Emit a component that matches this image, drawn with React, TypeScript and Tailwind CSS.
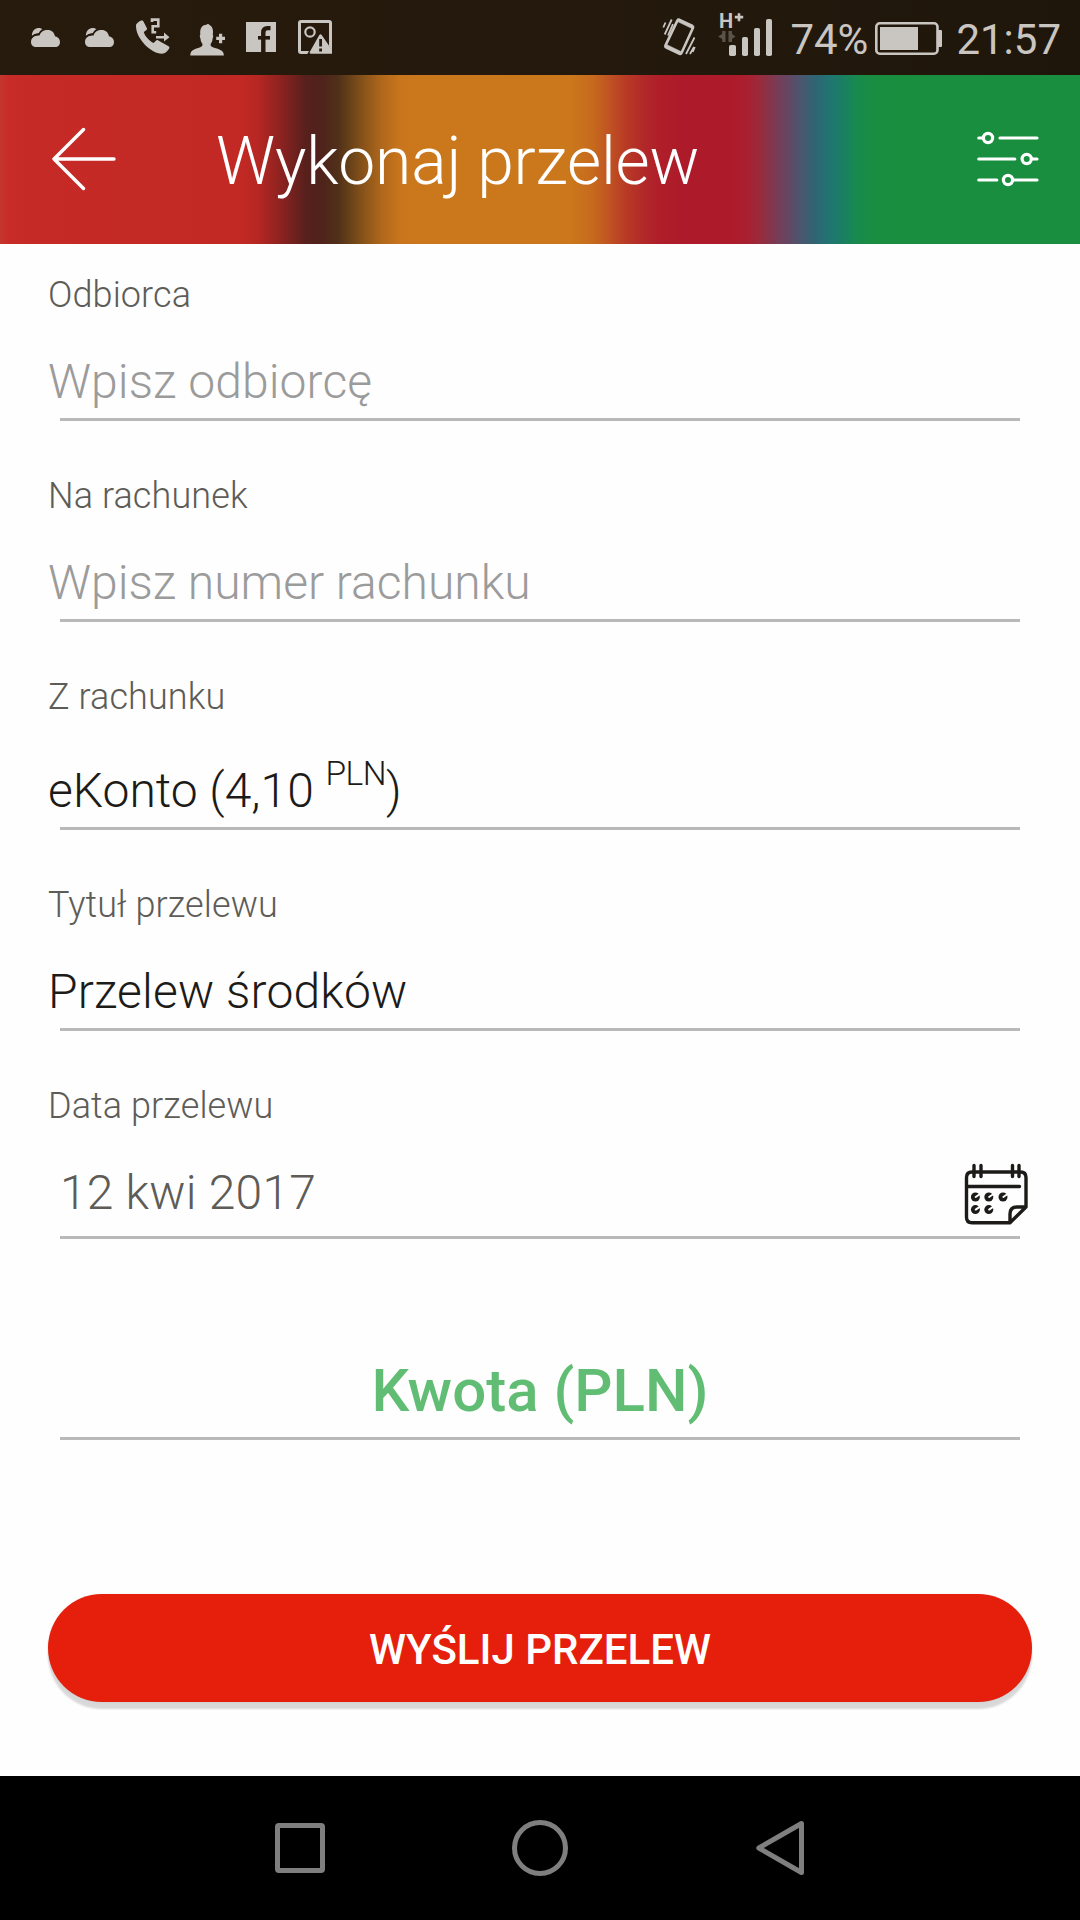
import React from "react";

const CloudIcon = ({ className }: { className?: string }) => (
  <svg className={className} width="29" height="65" viewBox="31 5 29 65" fill="currentColor">
    <path d="M32 36.5c-.6-4.800 2.600-8.300 6.300-8.500 1.900-.1 3.600.6 4.700 1.700-1.500.8-2.600 2-3.300 3.600-3-.2-5.800 1-7.700 3.200z" />
    <path d="M36 47c-3.200 0-5-2.300-5-5 0-3.800 3.500-7 8.300-6.300 1.300-4 4.400-5.700 8.200-5.700 4.500 0 6.500 2.500 7.500 6.200 3 .5 5 2.800 5 5.700 0 2.900-1.900 5.100-4.700 5.100z" />
    <path d="M31.500 37.300c2.200-2.400 4.700-3.200 7.500-3 .8-2.400 2.300-4 4.800-4.900" stroke="#24190c" strokeWidth="1.300" fill="none" />
  </svg>
);

const CallIcon = () => (
  <svg className="ml-[21px]" width="36" height="65" viewBox="135 5 36 65" fill="currentColor">
    <path d="M136 25.500c.2-2.300 3.800-5 6-5 .8 0 1.200.5 1.600 1.200l3.200 6.200c.5 1 .2 1.700-.6 2.300l-2.400 1.900c.9 3.900 5.700 9.300 9.800 11l2.300-2.400c.7-.7 1.500-.8 2.400-.2l10.300 5.800c1 .7 1 1.500.4 2.400-1.500 2.500-4 5-7 5.100C150.500 53.500 135.500 38 136 25.500z" />
    <path d="M152 22v-2.400h6.300v6.600h-5.600v6h3.500M156 37.200h9" fill="none" stroke="currentColor" strokeWidth="2.600" />
    <path d="M164 32.500l5.500 4.700-5.500 4.400z" />
  </svg>
);

const PersonAddIcon = () => (
  <svg className="ml-[19px]" width="35" height="65" viewBox="190 5 35 65" fill="currentColor">
    <path d="M190.300 55.500c0-5.500 4-6.300 8.700-7.800 2.700-.9 3.700-1.700 3.500-3.700-1.500-1.800-2-4-2-5.500-.8-1.500-.9-3-.2-4-.6-6 1.700-9.700 6-9.800l1.700-1 2.300 1.800c2.500 1.700 3.200 5 2.500 9 .6 1.200.5 2.600-.2 4-.1 2-.7 4-2 5.500-.3 2 .7 2.800 3.500 3.700 5 1.500 9.800 2.300 9.800 7.800z" />
    <path d="M219 33.800h3.200v3h2.800v3.200h-2.800v3.200H219V40h-2.800v-3.200h2.800z" />
  </svg>
);

const FacebookIcon = () => (
  <svg className="ml-[21px]" width="30" height="65" viewBox="246 5 30 65" fill="none">
    <rect x="246" y="22" width="30" height="30" fill="currentColor" />
    <path d="M263.300 52V32.500q0-4.400 4.200-4.400h3" stroke="#24190c" strokeWidth="4.400" />
    <path d="M258 37.800h12" stroke="#24190c" strokeWidth="3.600" />
  </svg>
);

const ImageWarningIcon = () => (
  <svg className="ml-[22px]" width="34" height="65" viewBox="298 5 34 65" fill="none">
    <rect x="299.500" y="21.500" width="31" height="31" rx="1.500" stroke="currentColor" strokeWidth="3" />
    <circle cx="310" cy="32" r="4.700" stroke="currentColor" strokeWidth="2.200" />
    <path d="M307 54.500L320.500 31 334 54.500z" fill="#24190c" />
    <path d="M311 53.800q-2 0-1-2.200l9.300-16.500q1.200-1.800 2.400 0L332 50v3.800z" fill="currentColor" />
    <path d="M320.600 39v7.500M320.600 48.500v3" stroke="#24190c" strokeWidth="2.800" />
  </svg>
);

const VibrateIcon = () => (
  <svg width="34" height="65" viewBox="662 5 34 65" fill="none" stroke="currentColor">
    <path d="M679.500 19.800l13 6.200q1 .6.500 1.700L681.500 53q-.6 1.200-1.800.7L666 47.300q-1.100-.6-.6-1.700L677.500 20.400q.7-1.200 2-.6z" strokeWidth="2.600" />
    <path d="M679 19.500l14 6.700-1 2.300-14-6.700zM666.500 44.500l14.500 7-1.400 3-14.500-7z" fill="currentColor" strokeWidth="0.500" />
    <path d="M663.300 27.500l2.200-5M664.700 34.500l7-15M668 35.500l5-11.300M694.800 47l-2.100 5M686 54l8.500-16.500M690 54l4-7" strokeWidth="1.800" />
  </svg>
);

const SignalIcon = () => (
  <svg className="ml-[22px]" width="55" height="65" viewBox="718 5 55 65" fill="currentColor">
    <text x="719" y="28" fontSize="20" fontWeight="700">H</text>
    <path d="M737.700 13.300h2.600v2.500h2.900v2.600h-2.900v2.900h-2.600v-2.900h-2.900v-2.600h2.900z" />
    <path d="M725.500 31v11h-3.300v-3L718 36.500l4.200-2.500v-3zM728.500 31h3.500v3l3.500 2.500-3.500 2.500v3h-3.500z" fill="#5b5248" />
    <rect x="729" y="45" width="7" height="11" rx="1.800" />
    <rect x="742" y="37" width="6" height="19" rx="1.800" />
    <rect x="754" y="28" width="6" height="28" rx="1.800" />
    <rect x="766" y="19" width="6" height="37" rx="1.800" />
  </svg>
);

const BatteryIcon = () => (
  <svg className="ml-[7px]" width="67" height="65" viewBox="875 5 67 65" fill="none">
    <rect x="876.300" y="23.300" width="61.200" height="30.400" rx="3.500" stroke="currentColor" strokeWidth="2.600" />
    <rect x="880" y="27" width="38" height="23" fill="currentColor" />
    <path d="M938 30h3q1.200 0 1.200 1.200v14.600q0 1.200-1.200 1.200h-3z" fill="currentColor" />
  </svg>
);

const BackIcon = () => (
  <svg className="mb-px" width="64" height="64" viewBox="52 127 64 64" fill="none" stroke="white" strokeWidth="3.400" strokeLinecap="round" strokeLinejoin="round">
    <path d="M114 159H54M83.500 129.500L54 159l29.500 29.500" />
  </svg>
);

const FiltersIcon = () => (
  <svg className="mb-px" width="62" height="56" viewBox="977 131 62 56" fill="none" stroke="white" strokeWidth="3.200" strokeLinecap="round">
    <path d="M978.800 138h4M1000 138h37M978.800 159h36M1032.500 159h4.500M978.800 180h18M1014 180h23" />
    <circle cx="988" cy="138" r="4.600" />
    <circle cx="1026.700" cy="159" r="4.600" />
    <circle cx="1008" cy="180" r="4.600" />
  </svg>
);

const CalendarIcon = () => (
  <svg width="64" height="62" viewBox="964 1163 64 62" fill="none" stroke="#1d1b18" strokeWidth="3.400" strokeLinecap="round">
    <path d="M1010 1222.800H972q-5.500 0-5.500-5.500v-39.800q0-5.500 5.500-5.500h48.500q5.500 0 5.500 5.500V1207l-16 15.800V1214q0-7 7-7h9" strokeLinejoin="round" />
    <path d="M967 1186.500h52.500M974 1165.500v11M981 1165.500v11M1012.500 1165.500v11M1019 1165.500v11" />
    {[[975.4, 1197], [988.8, 1197], [1003, 1197], [975.4, 1209.6], [988.8, 1209.6]].map(([x, y]) => (
      <g key={`${x}-${y}`}>
        <circle cx={x} cy={y} r="4.500" fill="#1d1b18" stroke="none" />
        <path d={`M${x + 0.3} ${y}l4-2.700`} stroke="white" strokeWidth="1.900" />
      </g>
    ))}
  </svg>
);

const StatusBar = () => (
  <div className="flex h-[75px] items-start justify-between bg-[linear-gradient(90deg,#271b0d,#24190c_50%,#1f160b)] pl-[31px] pr-[19px] text-[#c9c5c1]">
    <div className="flex h-[75px] items-center">
      <CloudIcon />
      <CloudIcon className="ml-[25px]" />
      <CallIcon />
      <PersonAddIcon />
      <FacebookIcon />
      <ImageWarningIcon />
    </div>
    <div className="flex h-[75px] items-center">
      <VibrateIcon />
      <SignalIcon />
      <span className="mt-1 ml-[17px] w-[78px] text-[42px] leading-[49px] whitespace-nowrap">74%</span>
      <BatteryIcon />
      <span className="mt-1 ml-[14px] text-[42px] leading-[49px]">21:57</span>
    </div>
  </div>
);

const Header = () => (
  <header className="flex h-[169px] items-center bg-[linear-gradient(90deg,#c4362e_0px,#c92c28_8px,#c52a26_30px,#c32924_240px,#b62723_258px,#8a2220_282px,#57201c_306px,#4f231b_322px,#50301a_338px,#6d4418_352px,#8e561a_366px,#b0681b_382px,#c9751d_400px,#cb781c_420px,#cb781c_570px,#c66a1d_593px,#c05322_609px,#b83a25_626px,#b22929_643px,#af1e29_660px,#ad1b2a_680px,#ad1b2a_733px,#a82031_748px,#992b3c_760px,#783c56_777px,#644663_788px,#48576f_802px,#2f6574_815px,#1f7672_831px,#1a8060_844px,#188a4e_856px,#198d42_870px,#1a8e3f_885px)] pl-[52px] pr-[41px] text-white">
    <BackIcon />
    <h1 className="mt-[5px] ml-[100px] flex-1 text-[66px] leading-[78px] font-light tracking-[-0.2px]">Wykonaj przelew</h1>
    <FiltersIcon />
  </header>
);

const Label = ({ children }: { children: React.ReactNode }) => (
  <div className="text-[36px] leading-[42px] font-light tracking-[0.1px] text-[#5d5c57]">{children}</div>
);

const Line = () => <div className="mx-3 h-[3px] bg-[#b9b9b9]" />;

const App = () => {
  return (
    <div className="flex h-[1920px] w-[1080px] flex-col bg-[#fefefe] font-['Roboto',sans-serif]">
      <StatusBar />
      <Header />

      <main className="flex flex-1 flex-col px-12 pt-[30px]">
        <div className="mb-[54px]">
          <Label>Odbiorca</Label>
          <div className="mt-[37px] mb-2 text-[48px] leading-[57px] font-light tracking-[0.08px] text-[#9b9b9b]">Wpisz odbiorcę</div>
          <Line />
        </div>

        <div className="mb-[54px]">
          <Label>Na rachunek</Label>
          <div className="mt-[37px] mb-2 text-[48px] leading-[57px] font-light text-[#9b9b9b]">Wpisz numer rachunku</div>
          <Line />
        </div>

        <div className="mb-[54px]">
          <Label>Z rachunku</Label>
          <div className="mt-11 mb-2 text-[48px] leading-[57px] font-light text-[#1d1b18]">
            eKonto (4,10 <span className="relative -top-[22px] text-[33.5px] leading-none tracking-[-0.5px]">PLN</span>)
          </div>
          <Line />
        </div>

        <div className="mb-[54px]">
          <Label>Tytuł przelewu</Label>
          <div className="mt-[37px] mb-2 text-[48px] leading-[57px] font-light tracking-[0.13px] text-[#1d1b18]">Przelew środków</div>
          <Line />
        </div>

        <div>
          <Label>Data przelewu</Label>
          <div className="mt-9 mr-1 flex h-[73px] items-start justify-between pl-3">
            <span className="mt-px text-[48px] leading-[57px] font-light tracking-[0.22px] text-[#5d5c57]">12 kwi 2017</span>
            <CalendarIcon />
          </div>
          <Line />
        </div>

        <div className="mt-[116px] mb-[11px] text-center text-[60px] leading-[71px] font-medium text-[#60bd73]">
          Kwota (PLN)
        </div>
        <Line />

        <button className="mt-[154px] h-[108px] rounded-full bg-[#e51f0c] pt-0.5 text-[42px] font-medium text-white shadow-[0_7px_2px_0_rgba(0,0,0,0.15),0_0_2px_0_rgba(0,0,0,0.1)]">
          WYŚLIJ PRZELEW
        </button>
      </main>

      <nav className="flex h-36 items-center justify-center bg-black pr-0.5 text-[#7f7f7f]">
        <div className="h-[50px] w-[50px] rounded-[4px] border-[5px] border-current" />
        <div className="ml-[187px] h-14 w-14 rounded-full border-[5px] border-current" />
        <svg className="ml-[188px]" width="48" height="56" viewBox="756 1820 48 56" fill="none" stroke="currentColor" strokeWidth="5" strokeLinejoin="round">
          <path d="M758.800 1848L801.500 1823.500v49z" />
        </svg>
      </nav>
    </div>
  );
};

export default App;
